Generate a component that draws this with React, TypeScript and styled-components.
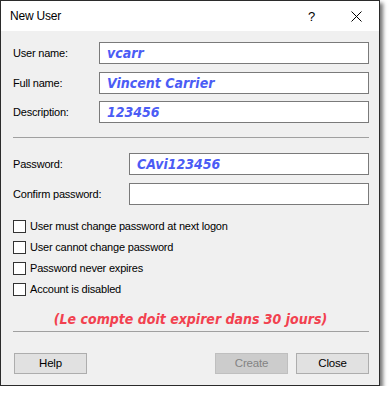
import React from "react";
import styled, { createGlobalStyle } from "styled-components";

const Global = createGlobalStyle`
  html, body { margin: 0; padding: 0; background: #ffffff; }
  * { box-sizing: border-box; }
`;

const Window = styled.div`
  width: 380px;
  height: 386px;
  border: 1px solid #2b2b2b;
  background: #f0f0f0;
  display: flex;
  flex-direction: column;
  box-shadow: 3px 3px 4px rgba(0, 0, 0, 0.55);
  font-family: "Liberation Sans", Arial, sans-serif;
  font-size: 11px;
  letter-spacing: -0.2px;
  color: #000;
`;

const TitleBar = styled.div`
  height: 30px;
  background: #ffffff;
  display: flex;
  align-items: center;
  padding-left: 9px;
`;

const Title = styled.div`
  flex: 1;
  font-size: 12px;
  letter-spacing: -0.2px;
`;

const TitleButton = styled.div`
  width: 45px;
  height: 30px;
  display: flex;
  align-items: center;
  justify-content: center;
  font-size: 13px;
`;

const Body = styled.div`
  flex: 1;
  display: flex;
  flex-direction: column;
  padding: 11px 10px 0 11px;
`;

const FormGrid = styled.div<{ $label: number }>`
  display: grid;
  grid-template-columns: ${(p) => p.$label}px 1fr;
  grid-auto-rows: 22px;
  row-gap: 7.5px;
  align-items: center;
`;

const Label = styled.div`
  padding-left: 1px;
`;

const Field = styled.div`
  height: 22px;
  border: 1px solid #7a7a7a;
  background: #ffffff;
  display: flex;
  align-items: center;
  padding-left: 7px;
`;

const Handwritten = styled.span<{ $color: string }>`
  font-family: "DejaVu Sans Condensed", "DejaVu Sans", sans-serif;
  font-stretch: condensed;
  font-weight: 700;
  font-style: italic;
  font-size: 14px;
  letter-spacing: 0;
  color: ${(p) => p.$color};
`;

const Separator = styled.div<{ $top: number }>`
  height: 1px;
  background: #a0a0a0;
  margin-top: ${(p) => p.$top}px;
  margin-left: 1px;
`;

const Group = styled.div<{ $top: number }>`
  margin-top: ${(p) => p.$top}px;
`;

const CheckRow = styled.div`
  height: 21px;
  display: flex;
  align-items: center;
`;

const Box = styled.div`
  width: 13px;
  height: 13px;
  border: 1px solid #333333;
  background: #ffffff;
  margin-left: 1px;
  margin-right: 4px;
`;

const Note = styled.div`
  margin-top: 10px;
  height: 18px;
  display: flex;
  align-items: center;
  justify-content: center;
`;

const ButtonRow = styled.div`
  margin-top: 21px;
  display: flex;
  justify-content: space-between;
  padding-left: 2px;
`;

const ButtonGroup = styled.div`
  display: flex;
  gap: 8px;
`;

const Button = styled.div<{ $disabled?: boolean }>`
  width: 73px;
  height: 21px;
  display: flex;
  align-items: center;
  justify-content: center;
  background: ${(p) => (p.$disabled ? "#cccccc" : "#e1e1e1")};
  border: 1px solid ${(p) => (p.$disabled ? "#bfbfbf" : "#adadad")};
  color: ${(p) => (p.$disabled ? "#838383" : "#000000")};
  font-size: 11.5px;
`;

const BLUE = "#4b5cf5";
const RED = "#f2414f";

const checks = [
  "User must change password at next logon",
  "User cannot change password",
  "Password never expires",
  "Account is disabled",
];

export default function App() {
  return (
    <>
      <Global />
      <Window>
        <TitleBar>
          <Title>New User</Title>
          <TitleButton>?</TitleButton>
          <TitleButton>
            <svg width="11" height="11" viewBox="0 0 11 11">
              <path d="M0.5 0.5 L10.5 10.5 M10.5 0.5 L0.5 10.5" stroke="#000" strokeWidth="1" fill="none" />
            </svg>
          </TitleButton>
        </TitleBar>
        <Body>
          <FormGrid $label={87}>
            <Label>User name:</Label>
            <Field>
              <Handwritten $color={BLUE}>vcarr</Handwritten>
            </Field>
            <Label>Full name:</Label>
            <Field>
              <Handwritten $color={BLUE}>Vincent Carrier</Handwritten>
            </Field>
            <Label>Description:</Label>
            <Field>
              <Handwritten $color={BLUE}>123456</Handwritten>
            </Field>
          </FormGrid>
          <Separator $top={14} />
          <Group $top={15}>
            <FormGrid $label={117}>
              <Label>Password:</Label>
              <Field>
                <Handwritten $color={BLUE}>CAvi123456</Handwritten>
              </Field>
              <Label>Confirm password:</Label>
              <Field />
            </FormGrid>
          </Group>
          <Group $top={11}>
            {checks.map((c) => (
              <CheckRow key={c}>
                <Box />
                {c}
              </CheckRow>
            ))}
          </Group>
          <Note>
            <Handwritten $color={RED}>(Le compte doit expirer dans 30 jours)</Handwritten>
          </Note>
          <Separator $top={3} />
          <ButtonRow>
            <Button>Help</Button>
            <ButtonGroup>
              <Button $disabled>Create</Button>
              <Button>Close</Button>
            </ButtonGroup>
          </ButtonRow>
        </Body>
      </Window>
    </>
  );
}
